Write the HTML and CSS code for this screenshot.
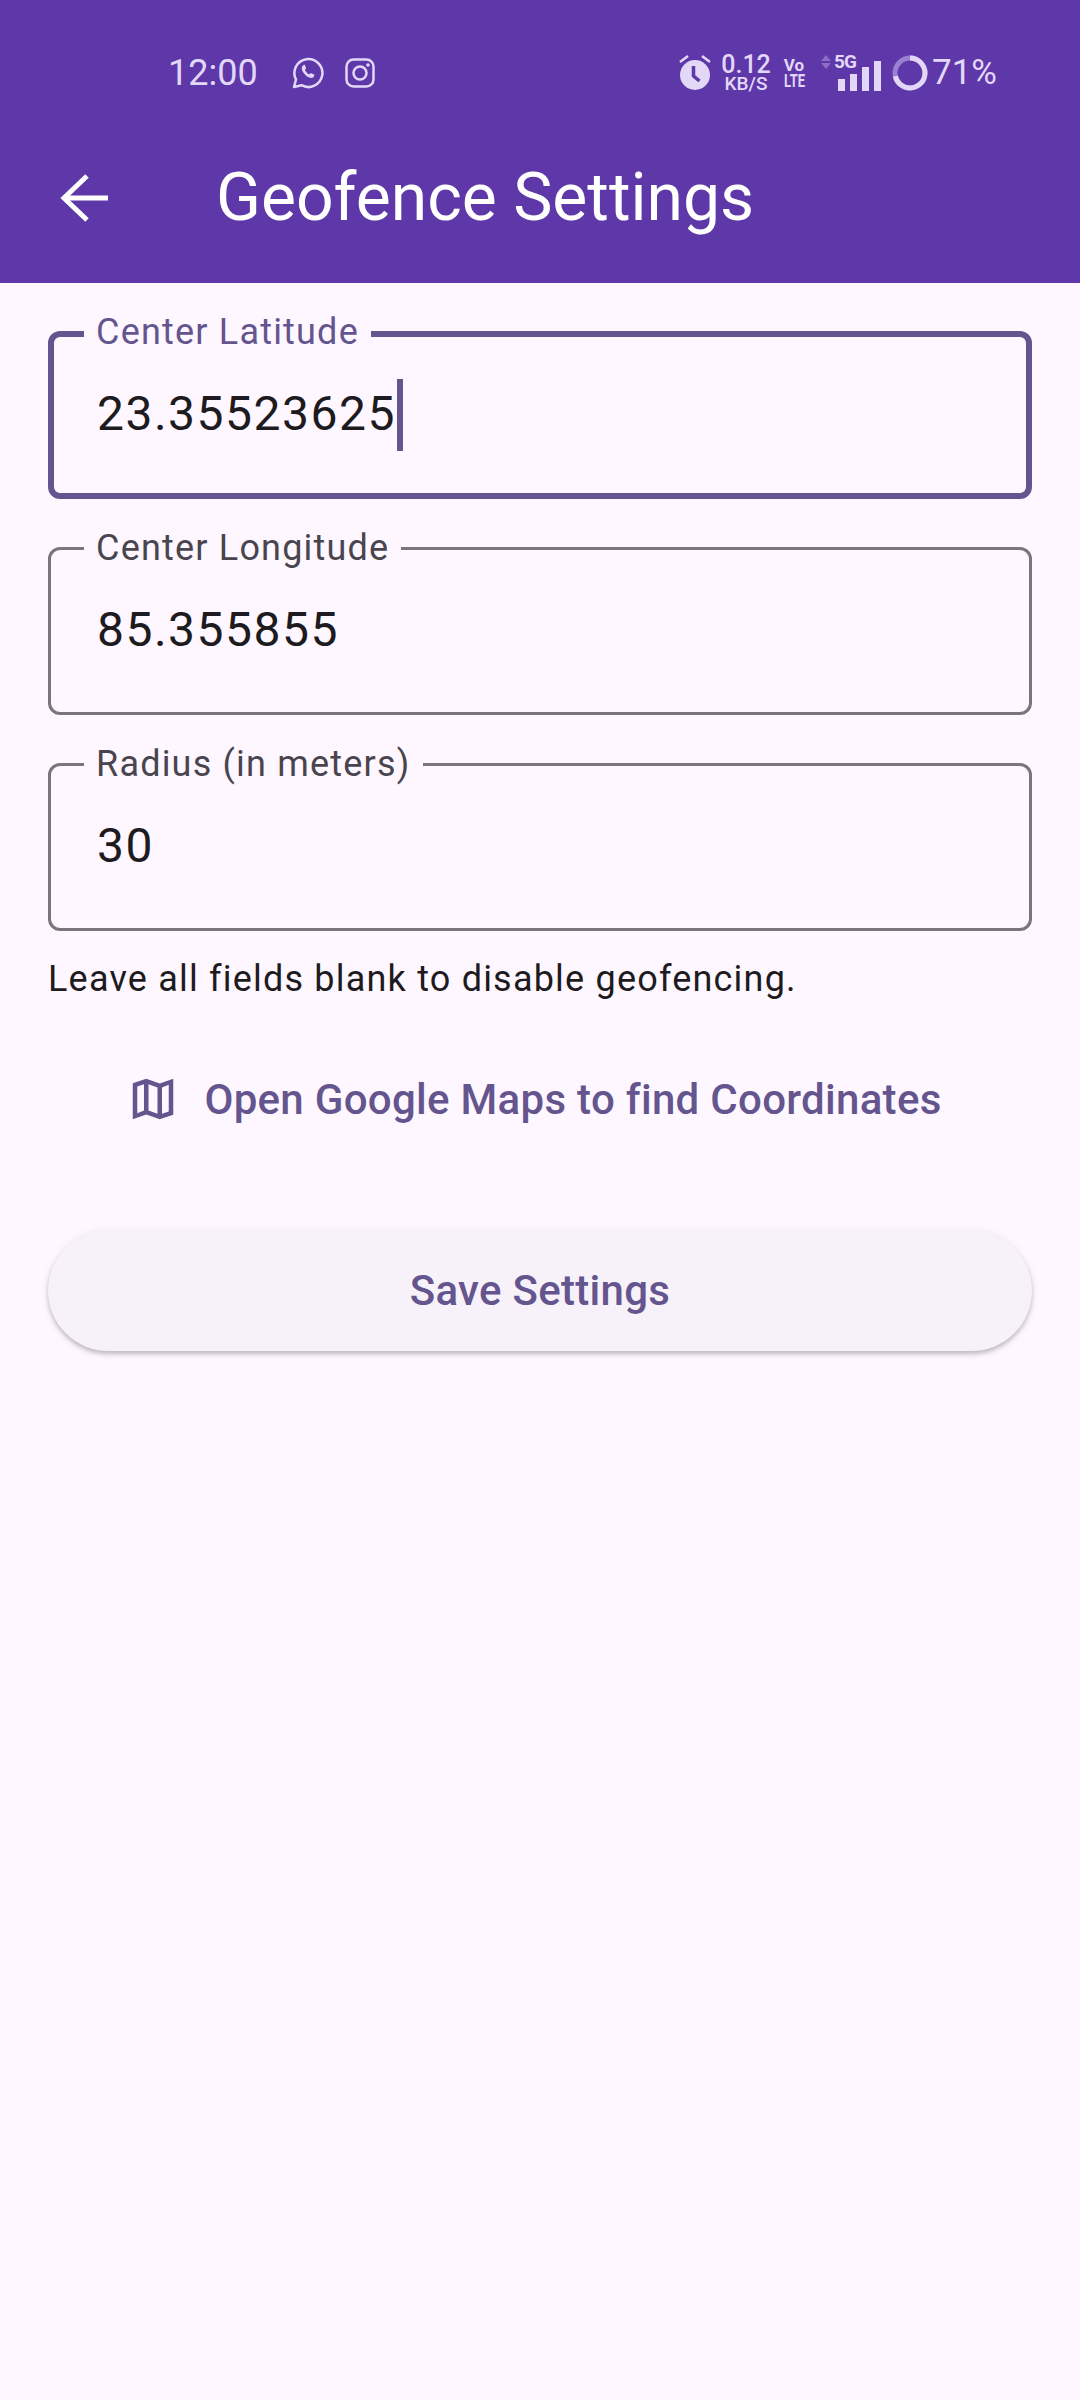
FILE: index.html
```html
<!DOCTYPE html>
<html lang="en">
<head>
<meta charset="utf-8">
<title>Geofence Settings</title>
<link rel="stylesheet" href="styles.css">
</head>
<body>
<header class="appbar">
  <div class="status">
    <div class="status-left">
      <span class="clock">12:00</span>
      <svg class="ic-wa" width="32" height="32" viewBox="0 0 32 32" fill="none" stroke="#e3d7f7" stroke-width="2.5"><path d="M2 30l2-7.500A14 14 0 1 1 9.500 28.200z" stroke-linejoin="round"/><path d="M11 8.500c-2 1.800-1.500 5 1.500 8.500 3.200 3.500 6.500 4.800 9 3.200l1-2.400-3.800-1.900-1.500 1.500c-1.800-1-3.400-2.700-4.300-4.500l1.300-1.600-1.600-3.800z" fill="#e3d7f7" stroke="none"/></svg>
      <svg class="ic-ig" width="30" height="30" viewBox="0 0 30 30" fill="none" stroke="#e3d7f7" stroke-width="2.5"><rect x="1.500" y="1.500" width="27" height="27" rx="7"/><circle cx="15" cy="15" r="6.500"/><circle cx="23" cy="7" r="1.800" fill="#e3d7f7" stroke="none"/></svg>
    </div>
    <div class="status-right">
      <svg class="ic-alarm" width="32" height="36" viewBox="0 0 32 36"><path d="M1 8l8-6M31 8l-8-6" stroke="#e3d7f7" stroke-width="2.500" fill="none"/><circle cx="16" cy="21" r="15" fill="#e3d7f7"/><path d="M14.500 12v10l6 5" stroke="#5e38a8" stroke-width="3.500" fill="none"/></svg>
      <span class="speed"><span class="speed-n">0.12</span><span class="speed-u">KB/S</span></span>
      <span class="volte"><span class="vo">Vo</span><span class="lte">LTE</span></span>
      <span class="net">
        <span class="net-top">
          <svg width="10" height="14" viewBox="0 0 10 14" fill="#8c6cc6"><path d="M5 0l5 6H0zM5 14l5-6H0z"/></svg>
          <span class="fiveg">5G</span>
        </span>
      </span>
      <svg class="bars" width="43" height="30" viewBox="0 0 43 30" fill="#e3d7f7"><rect x="0" y="18" width="7" height="12"/><rect x="12" y="13" width="7" height="17"/><rect x="24" y="6" width="7" height="24"/><rect x="36" y="0" width="7" height="30"/></svg>
      <svg class="ring" width="36" height="36" viewBox="0 0 36 36" fill="none" stroke-width="5"><circle cx="18" cy="18" r="15" stroke="#9a7fd2"/><circle cx="18" cy="18" r="15" stroke="#e3d7f7" stroke-dasharray="67 94.2" transform="rotate(-90 18 18)"/></svg>
      <span class="battery">71%</span>
    </div>
  </div>
  <div class="toolbar">
    <svg class="back" width="48" height="48" viewBox="0 0 48 48" fill="none" stroke="#fff" stroke-width="5"><path d="M48 24H5M27 2L4 24l23 22"/></svg>
    <h1 class="title">Geofence Settings</h1>
  </div>
</header>
<main class="content">
  <div class="fields">
    <div class="field field-focus">
      <span class="label">Center Latitude</span>
      <span class="value"><span class="digits">23.35523625</span><span class="caret"></span></span>
    </div>
    <div class="field">
      <span class="label">Center Longitude</span>
      <span class="value"><span class="digits">85.355855</span></span>
    </div>
    <div class="field">
      <span class="label">Radius (in meters)</span>
      <span class="value"><span class="digits">30</span></span>
    </div>
  </div>
  <p class="hint">Leave all fields blank to disable geofencing.</p>
  <div class="maps-link">
    <svg width="54" height="54" viewBox="0 0 24 24" fill="#65558f"><path d="M21 3l-6 2.100L9 3 3 5v16l6-2.100 6 2.100 6-2V3zM10 5.470l4 1.400v11.660l-4-1.400V5.470zm-5 .99l3-1.010v11.700l-3 1.160V6.460zm14 11.080l-3 1.010V6.860l3-1.160v11.840z"/></svg>
    <span>Open Google Maps to find Coordinates</span>
  </div>
  <div class="save">Save Settings</div>
</main>
</body>
</html>
```
FILE: styles.css
```css
* { box-sizing: border-box; }
html, body { margin: 0; }
body { width: 1080px; height: 2400px; background: #fef7ff; font-family: Roboto, sans-serif; overflow: hidden; }
.appbar { background: #5e38a8; height: 283px; }
.status { height: 145px; display: flex; justify-content: space-between; align-items: flex-start; padding: 52px 83px 0 168px; color: #e3d7f7; }
.status-left { display: flex; align-items: center; height: 42px; }
.clock { font-size: 36px; line-height: 42px; width: 124px; }
.ic-wa { margin-right: 21px; }
.status-right { display: flex; align-items: center; height: 42px; }
.ic-alarm { margin-top: -2px; }
.speed { display: flex; flex-direction: column; align-items: center; width: 46px; margin-left: 12px; font-weight: 500; }
.speed-n { font-size: 25px; line-height: 20px; }
.speed-u { font-size: 19px; line-height: 17px; }
.volte { display: flex; flex-direction: column; align-items: center; width: 22px; margin-left: 14px; font-weight: 700; }
.vo { font-size: 17px; line-height: 15px; }
.lte { font-size: 18px; line-height: 15px; transform: scaleX(.72); }
.net { display: block; width: 36px; height: 42px; margin-left: 16px; }
.net-top { display: flex; align-items: center; gap: 3px; margin-top: 2px; }
.net-top svg { display: block; }
.fiveg { font-size: 19px; line-height: 16px; font-weight: 700; letter-spacing: -.8px; }
.bars { margin: 5px 0 0 -19px; }
.ring { margin-left: 11px; }
.battery { font-size: 35px; line-height: 42px; margin-left: 4px; }
.toolbar { display: flex; align-items: center; height: 106px; padding-left: 60px; }
.back { flex: none; }
.title { margin: 0 0 0 108px; font-size: 66px; line-height: 84px; font-weight: 400; color: #fff; }
.content { padding: 48px 48px 0; }
.fields { display: flex; flex-direction: column; gap: 48px; }
.field { position: relative; display: flex; align-items: center; height: 168px; padding-left: 46px; border: 3px solid #79747e; border-radius: 12px; }
.field-focus { border: 6px solid #65558f; padding-left: 43px; }
.label { position: absolute; left: 33px; top: -22px; padding: 0 12px; background: #fef7ff; font-size: 36px; line-height: 40px; letter-spacing: 1.2px; color: #49454f; }
.field-focus .label { left: 30px; top: -25px; color: #65558f; }
.value { display: flex; align-items: center; font-size: 48px; letter-spacing: 1.5px; color: #1d1b20; }
.digits { line-height: 56px; margin-bottom: 3px; }
.caret { width: 6px; height: 72px; background: #65558f; margin-left: 1px; }
.hint { margin: 24px 0 0; font-size: 36px; line-height: 48px; letter-spacing: 1.2px; color: #1d1b20; }
.maps-link { display: flex; justify-content: center; align-items: center; gap: 24px; height: 48px; margin-top: 72px; padding-right: 12px; font-size: 42px; letter-spacing: .3px; font-weight: 500; color: #65558f; }
.save { display: flex; justify-content: center; align-items: center; height: 121px; margin-top: 107px; border-radius: 61px; background: #f7f2fa; font-size: 42px; letter-spacing: .3px; font-weight: 500; color: #65558f; box-shadow: 0 3px 4px rgba(0,0,0,.2), 0 2px 10px rgba(0,0,0,.08); }
```
